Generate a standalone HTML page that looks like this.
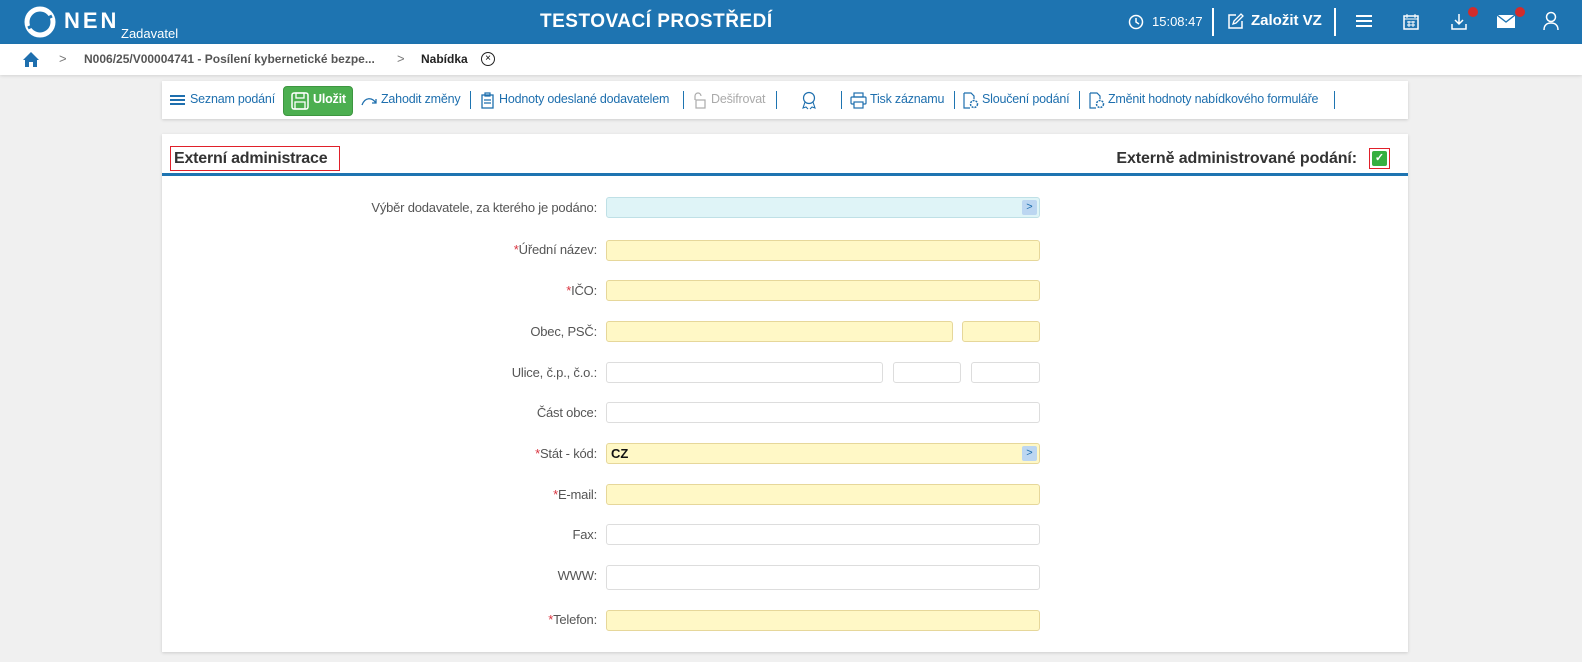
<!DOCTYPE html>
<html><head><meta charset="utf-8"><style>
*{box-sizing:border-box;margin:0;padding:0}
body{width:1582px;height:662px;background:#f0f0f0;font-family:"Liberation Sans",sans-serif;position:relative;overflow:hidden;font-size:13px}
.hdr{position:absolute;left:0;top:0;width:1582px;height:44px;background:#1e74b1;color:#fff}
.bc{position:absolute;left:0;top:44px;width:1582px;height:31px;background:#fff;box-shadow:0 1px 3px rgba(0,0,0,.12)}
.abs{position:absolute}
.card{position:absolute;left:162px;width:1246px;background:#fff;box-shadow:0 1px 3px rgba(0,0,0,.15)}
.tb{color:#1e6fae;font-size:12.5px;top:92px;position:absolute;white-space:nowrap;letter-spacing:-.2px}
.sep{position:absolute;top:91px;width:1px;height:18px;background:#1e74b1}
.lbl{position:absolute;right:985px;font-size:13px;color:#555;text-align:right;white-space:nowrap;letter-spacing:-.2px}
.lbl b{color:#d9333f;font-weight:normal}
.in{position:absolute;height:21px;border:1px solid #ddd;border-radius:3px;background:#fff}
.y{background:#fff8c6;border-color:#e6d79a}
.arr{position:absolute;right:2px;top:2px;width:15px;height:15px;background:#bcd6f1;border-radius:2px;color:#1e6fae;font-size:11px;text-align:center;line-height:14px}
</style></head><body>
<div class="hdr">
<svg class="abs" style="left:24px;top:6px" width="32" height="32" viewBox="0 0 32 32"><circle cx="16" cy="16" r="13" fill="none" stroke="#fff" stroke-width="5"/><path d="M4 22 L28 10" stroke="#1e74b1" stroke-width="3"/></svg>
<div class="abs" style="left:64px;top:8px;font-size:22px;font-weight:bold;letter-spacing:3px">NEN</div>
<div class="abs" style="left:121px;top:26px;font-size:13px">Zadavatel</div>
<div class="abs" style="left:540px;top:11px;font-size:19px;font-weight:bold;letter-spacing:.5px">TESTOVACÍ PROSTŘEDÍ</div>
<svg class="abs" style="left:1128px;top:14px" width="16" height="16" viewBox="0 0 16 16"><circle cx="8" cy="8" r="6.5" fill="none" stroke="#fff" stroke-width="1.5"/><path d="M8 4v4l3 2" fill="none" stroke="#fff" stroke-width="1.5"/></svg>
<div class="abs" style="left:1152px;top:14px;font-size:13px">15:08:47</div>
<div class="abs" style="left:1212px;top:8px;width:2px;height:28px;background:#fff"></div>
<svg class="abs" style="left:1227px;top:13px" width="17" height="17" viewBox="0 0 17 17"><path d="M9 2H2v13h13V8" fill="none" stroke="#fff" stroke-width="1.5"/><path d="M6 11l1-3 7-7 2 2-7 7z" fill="none" stroke="#fff" stroke-width="1.3"/></svg>
<div class="abs" style="left:1251px;top:12px;font-size:15px;font-weight:bold">Založit VZ</div>
<div class="abs" style="left:1334px;top:8px;width:2px;height:28px;background:#fff"></div>
<div class="abs" style="left:1356px;top:15px;width:16px;height:2px;background:#fff;box-shadow:0 5px #fff,0 10px #fff"></div>
<svg class="abs" style="left:1403px;top:13px" width="16" height="17" viewBox="0 0 16 17"><rect x="1" y="3" width="14" height="13" fill="none" stroke="#fff" stroke-width="1.5"/><path d="M1 6h14M4 1v4M12 1v4M4 9h8M4 12h8M6 8v6M10 8v6" stroke="#fff" stroke-width="1"/></svg>
<svg class="abs" style="left:1450px;top:13px" width="18" height="18" viewBox="0 0 18 18"><path d="M9 1v9M5 7l4 4 4-4M2 11v5h14v-5" fill="none" stroke="#fff" stroke-width="1.5"/></svg>
<div class="abs" style="left:1468px;top:7px;width:10px;height:10px;border-radius:50%;background:#d12c2c"></div>
<svg class="abs" style="left:1497px;top:15px" width="18" height="13" viewBox="0 0 18 13"><rect width="18" height="13" fill="#fff"/><path d="M0 0l9 7 9-7" fill="none" stroke="#1e74b1" stroke-width="1.3"/></svg>
<div class="abs" style="left:1515px;top:7px;width:10px;height:10px;border-radius:50%;background:#d12c2c"></div>
<svg class="abs" style="left:1543px;top:11px" width="16" height="20" viewBox="0 0 16 20"><circle cx="8" cy="6" r="4.5" fill="none" stroke="#fff" stroke-width="1.5"/><path d="M1 19c0-5 3-7 7-7s7 2 7 7" fill="none" stroke="#fff" stroke-width="1.5"/></svg>
</div>
<div class="bc">
<svg class="abs" style="left:22px;top:7px" width="18" height="17" viewBox="0 0 18 17"><path d="M9 1L1 9h2v7h4v-5h4v5h4V9h2z" fill="#1e6fae"/></svg>
<div class="abs" style="left:59px;top:7px;color:#777">&gt;</div>
<div class="abs" style="left:84px;top:8px;color:#555;font-weight:bold;font-size:12px">N006/25/V00004741 - Posílení kybernetické bezpe...</div>
<div class="abs" style="left:397px;top:7px;color:#777">&gt;</div>
<div class="abs" style="left:421px;top:8px;color:#222;font-weight:bold;font-size:12px">Nabídka</div>
<div class="abs" style="left:481px;top:8px;width:14px;height:14px;border:1.3px solid #222;border-radius:50%;font-size:10px;line-height:11px;text-align:center">×</div>
</div>
<div class="card" style="top:81px;height:38px"></div>
<div class="abs" style="left:170px;top:95px;width:15px;height:2px;background:#1e6fae;box-shadow:0 4px #1e6fae,0 8px #1e6fae"></div>
<div class="tb" style="left:190px">Seznam podání</div>
<div class="abs" style="left:283px;top:86px;width:70px;height:30px;background:#4caf50;border-radius:4px;border:1px solid #3d9640"></div>
<svg class="abs" style="left:291px;top:92px" width="18" height="18" viewBox="0 0 18 18"><rect x="1" y="1" width="16" height="16" rx="2" fill="none" stroke="#fff" stroke-width="1.5"/><rect x="5" y="1" width="8" height="5" fill="none" stroke="#fff" stroke-width="1.3"/><rect x="4" y="10" width="10" height="7" fill="none" stroke="#fff" stroke-width="1.3"/></svg>
<div class="tb" style="left:313px;color:#fff;font-weight:bold">Uložit</div>
<svg class="abs" style="left:361px;top:95px" width="16" height="12" viewBox="0 0 16 12"><path d="M1 10c3-8 10-8 14-2M11 8h4v-4" fill="none" stroke="#1e6fae" stroke-width="1.3"/></svg>
<div class="tb" style="left:381px">Zahodit změny</div><div class="sep" style="left:470px"></div>
<svg class="abs" style="left:481px;top:92px" width="13" height="17" viewBox="0 0 13 17"><rect x="1" y="3" width="11" height="13" fill="none" stroke="#1e6fae" stroke-width="1.3"/><path d="M4 1h5v3H4zM3 8h7M3 11h7" fill="none" stroke="#1e6fae" stroke-width="1.2"/></svg>
<div class="tb" style="left:499px">Hodnoty odeslané dodavatelem</div><div class="sep" style="left:683px"></div>
<svg class="abs" style="left:692px;top:92px" width="14" height="17" viewBox="0 0 14 17"><path d="M3 8V4a3 3 0 016 0" fill="none" stroke="#aaa" stroke-width="1.2"/><rect x="4" y="8" width="9" height="8" fill="none" stroke="#aaa" stroke-width="1.2"/></svg>
<div class="tb" style="left:711px;color:#aaa">Dešifrovat</div><div class="sep" style="left:776px"></div>
<svg class="abs" style="left:801px;top:91px" width="16" height="19" viewBox="0 0 16 19"><circle cx="8" cy="7" r="5.5" fill="none" stroke="#1e6fae" stroke-width="1.2"/><path d="M4 11l-2 6 3-1 2 2M12 11l2 6-3-1-2 2" fill="none" stroke="#1e6fae" stroke-width="1.1"/></svg>
<div class="sep" style="left:841px"></div>
<svg class="abs" style="left:850px;top:92px" width="17" height="17" viewBox="0 0 17 17"><rect x="4" y="1" width="9" height="4" fill="none" stroke="#1e6fae" stroke-width="1.2"/><rect x="1" y="5" width="15" height="7" rx="1" fill="none" stroke="#1e6fae" stroke-width="1.2"/><rect x="4" y="10" width="9" height="6" fill="#fff" stroke="#1e6fae" stroke-width="1.2"/></svg>
<div class="tb" style="left:870px">Tisk záznamu</div><div class="sep" style="left:954px"></div>
<svg class="abs" style="left:962px;top:92px" width="17" height="17" viewBox="0 0 17 17"><path d="M2 1h7l3 3v3M2 1v15h6" fill="none" stroke="#1e6fae" stroke-width="1.2"/><circle cx="12" cy="12" r="3.5" fill="none" stroke="#1e6fae" stroke-width="1.5" stroke-dasharray="2 1"/></svg>
<div class="tb" style="left:982px">Sloučení podání</div><div class="sep" style="left:1079px"></div>
<svg class="abs" style="left:1088px;top:92px" width="17" height="17" viewBox="0 0 17 17"><path d="M2 1h7l3 3v3M2 1v15h6" fill="none" stroke="#1e6fae" stroke-width="1.2"/><circle cx="12" cy="12" r="3.5" fill="none" stroke="#1e6fae" stroke-width="1.5" stroke-dasharray="2 1"/></svg>
<div class="tb" style="left:1108px">Změnit hodnoty nabídkového formuláře</div><div class="sep" style="left:1334px"></div>

<div class="card" style="top:134px;height:518px"></div>
<div class="abs" style="left:162px;top:173px;width:1246px;height:3px;background:#1e74b1"></div>
<div class="abs" style="left:170px;top:146px;width:170px;height:25px;border:1px solid #e0202a"></div>
<div class="abs" style="left:174px;top:150px;font-size:16px;font-weight:bold;color:#333;letter-spacing:-.2px">Externí administrace</div>
<div class="abs" style="right:225px;top:150px;font-size:16px;font-weight:bold;color:#333;letter-spacing:-.1px">Externě administrované podání:</div>
<div class="abs" style="left:1369px;top:148px;width:21px;height:21px;border:1px solid #e0202a"></div>
<div class="abs" style="left:1372px;top:151px;width:15px;height:15px;background:#35b040;border-radius:2px;color:#fff;font-size:11px;text-align:center;line-height:15px;font-weight:bold">✓</div>

<div class="lbl" style="top:200px">Výběr dodavatele, za kterého je podáno:</div>
<div class="in" style="left:606px;top:197px;width:434px;background:#dff4f7;border-color:#bfe0e6"><div class="arr">&gt;</div></div>
<div class="lbl" style="top:242px"><b>*</b>Úřední název:</div>
<div class="in y" style="left:606px;top:240px;width:434px"></div>
<div class="lbl" style="top:283px"><b>*</b>IČO:</div>
<div class="in y" style="left:606px;top:280px;width:434px"></div>
<div class="lbl" style="top:324px">Obec, PSČ:</div>
<div class="in y" style="left:606px;top:321px;width:347px"></div>
<div class="in y" style="left:962px;top:321px;width:78px"></div>
<div class="lbl" style="top:365px">Ulice, č.p., č.o.:</div>
<div class="in" style="left:606px;top:362px;width:277px"></div>
<div class="in" style="left:893px;top:362px;width:68px"></div>
<div class="in" style="left:971px;top:362px;width:69px"></div>
<div class="lbl" style="top:405px">Část obce:</div>
<div class="in" style="left:606px;top:402px;width:434px"></div>
<div class="lbl" style="top:446px"><b>*</b>Stát - kód:</div>
<div class="in y" style="left:606px;top:443px;width:434px"><span style="position:absolute;left:4px;top:2px;font-weight:bold;font-size:13px;color:#111">CZ</span><div class="arr">&gt;</div></div>
<div class="lbl" style="top:487px"><b>*</b>E-mail:</div>
<div class="in y" style="left:606px;top:484px;width:434px"></div>
<div class="lbl" style="top:527px">Fax:</div>
<div class="in" style="left:606px;top:524px;width:434px"></div>
<div class="lbl" style="top:568px">WWW:</div>
<div class="in" style="left:606px;top:565px;width:434px;height:25px"></div>
<div class="lbl" style="top:612px"><b>*</b>Telefon:</div>
<div class="in y" style="left:606px;top:610px;width:434px"></div>
</body></html>
